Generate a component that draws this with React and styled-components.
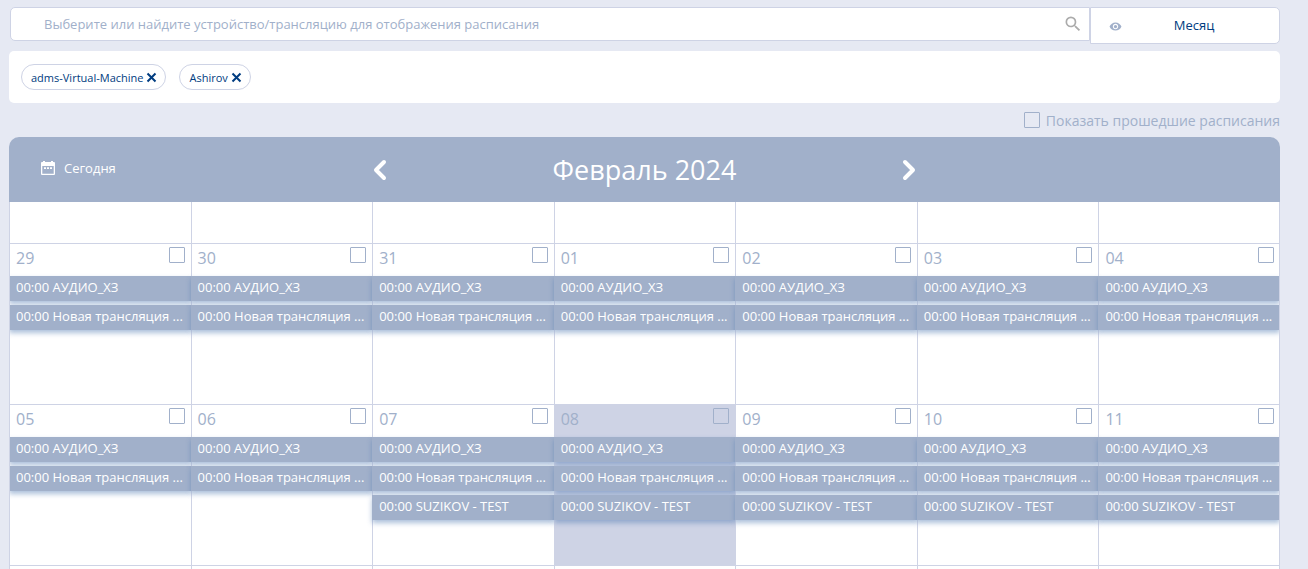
import React, { useState } from "react";
import styled, { createGlobalStyle } from "styled-components"
import { MdSearch, MdVisibility } from "react-icons/md"

const GlobalStyle = createGlobalStyle`
    * {
        box-sizing: border-box;
    }
    body {
        margin: 0;
        background-color: #E6E9F3;
        font-family: "Open Sans", "Noto Sans", sans-serif;
        overflow: hidden;
    }
    button, input {
        font-family: inherit;
    }
`

// Page

const Container = styled.main`
    display: flex;
    flex-flow: column nowrap;
    padding: 7px 28px 0 9px;
`
//~~~~~~~~~~~~~~~~~~~~~~~~~~~

// Top bar

const TopBar = styled.div`
    display: flex;
    align-items: flex-start;
    padding-left: 1px;
`
const SearchBox = styled.label`
    flex: 1;
    height: 34px;
    display: flex;
    align-items: center;
    background-color: #fff;
    border: 1px solid #CED3E5;
    border-radius: 5px 0 0 5px;
    padding: 0 6px 0 33px;
    color: #ABABAB;
`
const SearchInput = styled.input`
    flex: 1;
    min-width: 0;
    border: none;
    outline: none;
    padding: 0;
    background: none;
    font-size: 13px;
    color: #003C80;

    &::placeholder {
        color: #A1B0CA;
        opacity: 1;
    }
`
const ViewButton = styled.button`
    width: 190px;
    height: 37px;
    display: flex;
    align-items: center;
    background-color: #fff;
    border: 1px solid #CED3E5;
    border-radius: 0 5px 5px 0;
    padding: 0 18px 2px;
    font-size: 13px;
    color: #003C80;
    cursor: pointer;

    svg {
        color: #A1B0CA;
        margin-top: 4px;
    }
`
const ViewName = styled.span`
    flex: 1;
    padding-left: 5px;
    text-align: center;
`
//~~~~~~~~~~~~~~~~~~~~~~~~~~~

// Selected devices

const Devices = styled.div`
    display: flex;
    flex-wrap: wrap;
    gap: 13px;
    margin-top: 7px;
    padding: 13px 12px;
    background-color: #fff;
    border-radius: 5px;
`
const Chip = styled.div`
    height: 26px;
    display: flex;
    align-items: center;
    gap: 3px;
    border: 1px solid #CED3E5;
    border-radius: 13px;
    padding: 0 8px 0 9px;
    font-size: 11px;
    color: #003C80;
`
const ChipRemove = styled.button`
    display: flex;
    border: none;
    background: none;
    padding: 0;
    color: #003C80;
    cursor: pointer;
`
//~~~~~~~~~~~~~~~~~~~~~~~~~~~

// Checkboxes

const Checkbox = styled.input.attrs({ type: "checkbox" })`
    appearance: none;
    flex: none;
    width: 16px;
    height: 16px;
    margin: 0;
    border: 1px solid #A1B0CA;
    border-radius: 1px;
    cursor: pointer;

    &:checked {
        background-color: #A1B0CA;
    }
`
const ShowPast = styled.label`
    align-self: flex-end;
    display: flex;
    align-items: center;
    gap: 6px;
    height: 34px;
    font-size: 14px;
    color: #A1B0CA;
`
//~~~~~~~~~~~~~~~~~~~~~~~~~~~

// Calendar header

const Header = styled.header`
    height: 65px;
    display: grid;
    grid-template-columns: 2fr 3fr 2fr;
    align-items: center;
    background-color: #A1B0CA;
    border-radius: 10px 10px 0 0;
    color: #fff;
`
const TodayButton = styled.button`
    justify-self: start;
    display: flex;
    align-items: center;
    gap: 9px;
    border: none;
    background: none;
    padding: 0 0 3px 32px;
    font-size: 13px;
    color: #fff;
    cursor: pointer;
`
const MonthSwitch = styled.div`
    display: flex;
    align-items: center;
    justify-content: space-between;
`
const MonthName = styled.h1`
    margin: 0;
    font-size: 27px;
    font-weight: 400;
`
const ArrowButton = styled.button`
    display: flex;
    border: none;
    background: none;
    padding: 0;
    color: #fff;
    cursor: pointer;
`
//~~~~~~~~~~~~~~~~~~~~~~~~~~~

// Calendar grid

const Calendar = styled.section`
    border: solid #CED3E5;
    border-width: 0 1px;
    background-color: #fff;
    overflow: hidden;
`
const Grid = styled.div`
    display: grid;
    grid-template-columns: repeat(7, minmax(0, 1fr));
    margin: 0 -1px;
`
const WeekDay = styled.div`
    height: 42px;
    border: solid #CED3E5;
    border-width: 0 0 1px 1px;
`
const Day = styled.div`
    height: 161px;
    border: solid #CED3E5;
    border-width: 0 0 1px 1px;
    background-color: ${props => props.$today ? "#CED3E5" : "transparent"};
`
const DayTop = styled.div`
    height: 32px;
    display: flex;
    justify-content: space-between;
    align-items: flex-start;
    padding: 3px 6px 0;
`
const DayNumber = styled.span`
    font-size: 16px;
    line-height: 22px;
    color: #A1B0CA;
`
const Events = styled.div`
    display: flex;
    flex-flow: column nowrap;
    gap: 4px;
    margin-left: -1px;
`
const Event = styled.a`
    display: block;
    height: 25px;
    padding: 0 6px 0 7px;
    background-color: #A1B0CA;
    box-shadow: 0 3px 5px rgba(70, 115, 175, .45);
    font-size: 13px;
    line-height: 23px;
    color: #fff;
    text-decoration: none;
    white-space: nowrap;
    overflow: hidden;
    text-overflow: ellipsis;
`

const AUDIO = "00:00 АУДИО_ХЗ"
const STREAM = "00:00 Новая трансляция ..."
const SUZIKOV = "00:00 SUZIKOV - TEST"

const days = [
    { number: "29", events: [AUDIO, STREAM] },
    { number: "30", events: [AUDIO, STREAM] },
    { number: "31", events: [AUDIO, STREAM] },
    { number: "01", events: [AUDIO, STREAM] },
    { number: "02", events: [AUDIO, STREAM] },
    { number: "03", events: [AUDIO, STREAM] },
    { number: "04", events: [AUDIO, STREAM] },
    { number: "05", events: [AUDIO, STREAM] },
    { number: "06", events: [AUDIO, STREAM] },
    { number: "07", events: [AUDIO, STREAM, SUZIKOV] },
    { number: "08", events: [AUDIO, STREAM, SUZIKOV], today: true },
    { number: "09", events: [AUDIO, STREAM, SUZIKOV] },
    { number: "10", events: [AUDIO, STREAM, SUZIKOV] },
    { number: "11", events: [AUDIO, STREAM, SUZIKOV] },
]

function Arrow({ d }) {
    return (
        <svg width="16" height="24" viewBox="0 0 16 24" fill="none" stroke="currentColor" strokeWidth="4" strokeLinecap="round" strokeLinejoin="round">
            <path d={d} />
        </svg>
    )
}

function CloseIcon() {
    return (
        <svg width="11" height="11" viewBox="0 0 11 11" fill="none" stroke="currentColor" strokeWidth="2">
            <path d="M1.5 1.5L9.5 9.5M9.5 1.5L1.5 9.5" />
        </svg>
    )
}

function CalendarIcon() {
    return (
        <svg width="14" height="14" viewBox="0 0 14 14" fill="currentColor">
            <path fillRule="evenodd" d="M2 0H4V1H10V0H12V1H13Q14 1 14 2V13Q14 14 13 14H1Q0 14 0 13V2Q0 1 1 1H2ZM1.3 5V12.7H12.7V5Z" />
            <path d="M3 6.3H5V8H3ZM6 6.3H8V8H6ZM9 6.3H11V8H9Z" />
        </svg>
    )
}

function App() {
    const [devices, setDevices] = useState(["adms-Virtual-Machine", "Ashirov"])

    return (
        <Container>
            <GlobalStyle />
            <TopBar>
                <SearchBox>
                    <SearchInput type="text" placeholder="Выберите или найдите устройство/трансляцию для отображения расписания" />
                    <MdSearch size={20} />
                </SearchBox>
                <ViewButton>
                    <MdVisibility size={13} />
                    <ViewName>Месяц</ViewName>
                </ViewButton>
            </TopBar>
            <Devices>
                {devices.map(device => (
                    <Chip key={device}>
                        {device}
                        <ChipRemove onClick={() => setDevices(devices.filter(item => item !== device))}>
                            <CloseIcon />
                        </ChipRemove>
                    </Chip>
                ))}
            </Devices>
            <ShowPast>
                <Checkbox />
                Показать прошедшие расписания
            </ShowPast>
            <Header>
                <TodayButton>
                    <CalendarIcon />
                    Сегодня
                </TodayButton>
                <MonthSwitch>
                    <ArrowButton>
                        <Arrow d="M12 4L4 12L12 20" />
                    </ArrowButton>
                    <MonthName>Февраль 2024</MonthName>
                    <ArrowButton>
                        <Arrow d="M4 4L12 12L4 20" />
                    </ArrowButton>
                </MonthSwitch>
            </Header>
            <Calendar>
                <Grid>
                    {days.slice(0, 7).map(day => <WeekDay key={day.number} />)}
                    {days.map(day => (
                        <Day key={day.number} $today={day.today}>
                            <DayTop>
                                <DayNumber id={"day-" + day.number}>{day.number}</DayNumber>
                                <Checkbox aria-labelledby={"day-" + day.number} />
                            </DayTop>
                            <Events>
                                {day.events.map(event => <Event key={event} href="#">{event}</Event>)}
                            </Events>
                        </Day>
                    ))}
                    {days.slice(0, 7).map(day => <Day key={day.number} />)}
                </Grid>
            </Calendar>
        </Container>
    )
}

export default App
